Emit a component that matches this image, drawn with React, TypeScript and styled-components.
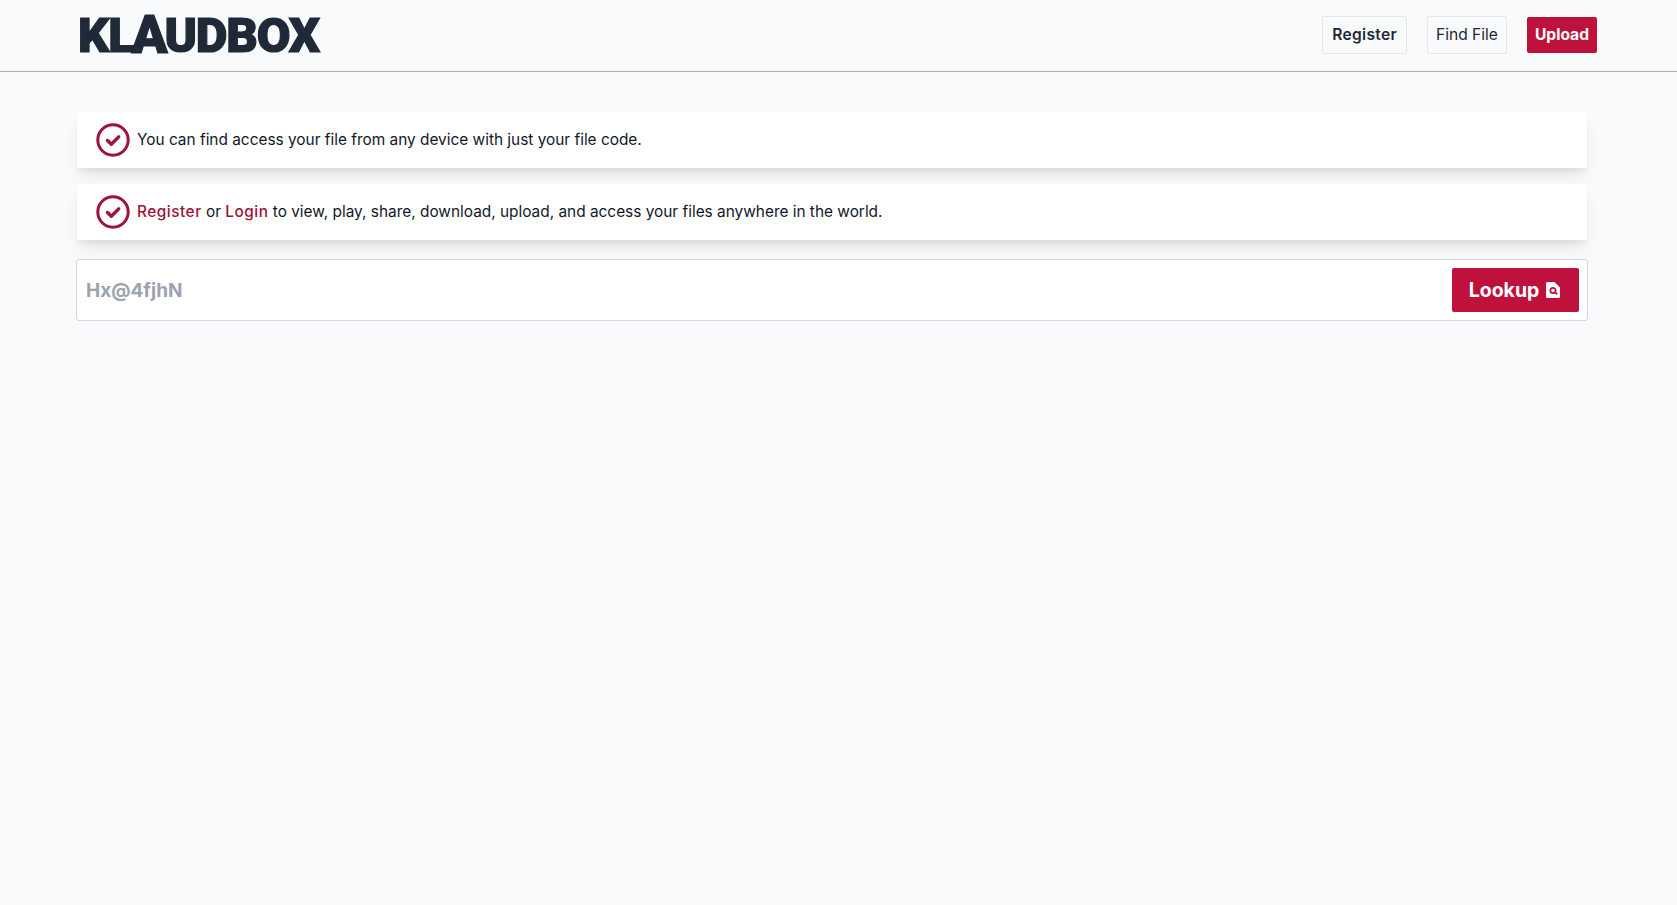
import React from "react";
import styled, { createGlobalStyle } from "styled-components";

const GlobalStyle = createGlobalStyle`
  html, body {
    margin: 0;
    padding: 0;
    min-height: 100%;
    background-color: #f9fafb;
  }
  body {
    font-family: "Inter", "Roboto", "Liberation Sans", sans-serif;
    color: #111827;
  }
  * {
    box-sizing: border-box;
  }
`;

const Page = styled.div`
  min-height: 905px;
  background-color: #f9fafb;
`;

const Navbar = styled.nav`
  height: 72px;
  padding: 0 80px 2px 78px;
  display: flex;
  align-items: center;
  justify-content: space-between;
  border-bottom: 1px solid #aeaeae;
`;

const Logo = styled.a`
  display: flex;
  align-items: flex-end;
  height: 37px;
  font-family: "Roboto", "Liberation Sans", sans-serif;
  font-size: 49px;
  line-height: 35px;
  font-weight: 900;
  letter-spacing: -1.2px;
  color: #1f2937;
  -webkit-text-stroke: 1.2px #1f2937;
`;

const LogoPeak = styled.span`
  font-size: 53px;
  line-height: 35px;
  margin: 0 -2px;
`;

const NavActions = styled.div`
  display: flex;
  align-items: center;
  gap: 20px;
`;

const NavButton = styled.button<{ $bold?: boolean }>`
  height: 38px;
  padding: 0 ${(p) => (p.$bold ? 9 : 8)}px;
  background: transparent;
  border: 1px solid #e5e7eb;
  border-radius: 2px;
  font-family: inherit;
  font-size: 15.6px;
  font-weight: ${(p) => (p.$bold ? 600 : 400)};
  letter-spacing: ${(p) => (p.$bold ? 0.3 : 0)}px;
  color: #1f2937;
`;

const UploadButton = styled.button`
  height: 36px;
  padding: 0 8px;
  background-color: #be123c;
  border: none;
  border-radius: 2px;
  font-family: inherit;
  font-size: 15.6px;
  font-weight: 700;
  color: #fff;
`;

const Main = styled.main`
  padding: 40px 89px 0 76px;
  display: flex;
  flex-direction: column;
`;

const Alert = styled.div`
  height: 56px;
  margin: 0 1px 16px 1px;
  padding: 0 19px;
  display: flex;
  align-items: center;
  gap: 7px;
  background-color: #fff;
  border-radius: 2px;
  box-shadow: 0 10px 15px -3px rgba(0, 0, 0, 0.1), 0 4px 6px -2px rgba(0, 0, 0, 0.05);
  font-size: 15.4px;
  color: #111827;
`;

const AlertText = styled.span`
  margin-bottom: 2px;
`;

const AlertLink = styled.a`
  color: #9f1239;
  font-weight: 500;
  letter-spacing: 0.5px;
`;

const SearchBox = styled.form`
  height: 62px;
  margin-top: 3px;
  padding: 8px 8px 8px 7px;
  display: flex;
  align-items: center;
  background-color: #fff;
  border: 1px solid #d1d5db;
  border-radius: 3px;
`;

const SearchInput = styled.input`
  flex: 1;
  min-width: 0;
  border: none;
  outline: none;
  background: transparent;
  font-family: inherit;
  font-size: 19px;
  font-weight: 700;
  color: #111827;

  &::placeholder {
    color: #9ca3af;
    opacity: 1;
  }
`;

const LookupButton = styled.button`
  width: 127px;
  height: 44px;
  padding: 0 2px 0 0;
  display: flex;
  align-items: center;
  justify-content: center;
  gap: 7px;
  background-color: #be123c;
  border: none;
  border-radius: 2px;
  font-family: inherit;
  font-size: 19.5px;
  font-weight: 700;
  color: #fff;
`;

const CheckCircle = () => (
  <svg width="34" height="34" viewBox="0 0 34 34" fill="none">
    <circle cx="17" cy="17" r="15.2" stroke="#9f1239" strokeWidth="3" />
    <path
      d="M11.5 17.5l3.8 3.8 7.4-7.4"
      stroke="#9f1239"
      strokeWidth="3.4"
      strokeLinecap="round"
      strokeLinejoin="round"
    />
  </svg>
);

const FileSearch = () => (
  <svg width="14" height="16" viewBox="0 0 14 16">
    <path
      fillRule="evenodd"
      fill="#fff"
      d="M1.5 0H8.5L14 5.5V14.5A1.5 1.5 0 0 1 12.5 16H1.5A1.5 1.5 0 0 1 0 14.5V1.5A1.5 1.5 0 0 1 1.5 0ZM7 5A3.5 3.5 0 1 0 7 12A3.5 3.5 0 0 0 9 11.4L10.6 13L11.8 11.8L10.2 10.2A3.5 3.5 0 0 0 7 5ZM7 6.7A1.8 1.8 0 1 1 7 10.3A1.8 1.8 0 0 1 7 6.7Z"
    />
  </svg>
);

export default function App() {
  return (
    <Page>
      <GlobalStyle />
      <Navbar>
        <Logo>
          KL<LogoPeak>A</LogoPeak>UDBOX
        </Logo>
        <NavActions>
          <NavButton $bold>Register</NavButton>
          <NavButton>Find File</NavButton>
          <UploadButton>Upload</UploadButton>
        </NavActions>
      </Navbar>
      <Main>
        <Alert>
          <CheckCircle />
          <AlertText>You can find access your file from any device with just your file code.</AlertText>
        </Alert>
        <Alert>
          <CheckCircle />
          <AlertText>
            <AlertLink>Register</AlertLink> or <AlertLink>Login</AlertLink> to view, play, share,
            download, upload, and access your files anywhere in the world.
          </AlertText>
        </Alert>
        <SearchBox>
          <SearchInput placeholder="Hx@4fjhN" />
          <LookupButton>
            Lookup <FileSearch />
          </LookupButton>
        </SearchBox>
      </Main>
    </Page>
  );
}
